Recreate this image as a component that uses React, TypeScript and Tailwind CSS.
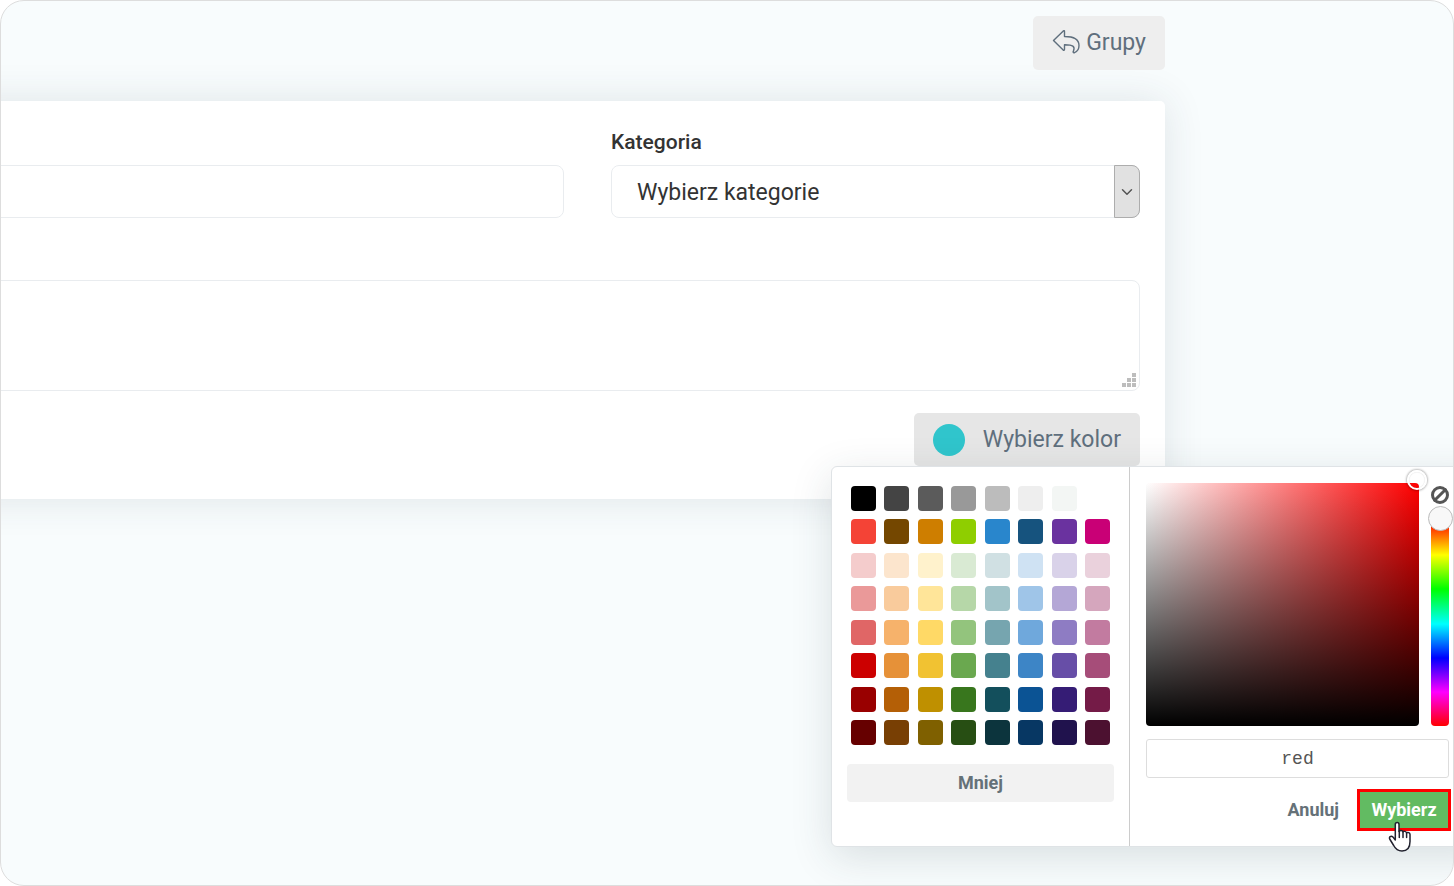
import { useState } from 'react';
import { Ban, ChevronDown } from 'lucide-react';

const PALETTE = [
  ['#000000', '#444444', '#5b5b5b', '#999999', '#bcbcbc', '#eeeeee', '#f3f6f4', '#ffffff'],
  ['#f44336', '#744700', '#ce7e00', '#8fce00', '#2986cc', '#16537e', '#6a329f', '#c90076'],
  ['#f4cccc', '#fce5cd', '#fff2cc', '#d9ead3', '#d0e0e3', '#cfe2f3', '#d9d2e9', '#ead1dc'],
  ['#ea9999', '#f9cb9c', '#ffe599', '#b6d7a8', '#a2c4c9', '#9fc5e8', '#b4a7d6', '#d5a6bd'],
  ['#e06666', '#f6b26b', '#ffd966', '#93c47d', '#76a5af', '#6fa8dc', '#8e7cc3', '#c27ba0'],
  ['#cc0000', '#e69138', '#f1c232', '#6aa84f', '#45818e', '#3d85c6', '#674ea7', '#a64d79'],
  ['#990000', '#b45f06', '#bf9000', '#38761d', '#134f5c', '#0b5394', '#351c75', '#741b47'],
  ['#660000', '#783f04', '#7f6000', '#274e13', '#0c343d', '#073763', '#20124d', '#4c1130'],
];

function ReplyIcon() {
  return (
    <svg width="28" height="28" viewBox="0 0 28 28" fill="none" stroke="currentColor" strokeWidth="1.4" strokeLinejoin="round">
      <path d="M1.500 11.500 11.300 1.900Q12.500 1.200 12.500 2.500V7.500C21 7.500 27 10 27 16.500 27 20 25.500 22.500 22.500 23.700 21 24 20.800 23 21.500 22 23.300 17.500 21 15.600 12.500 15.700V20.500Q12.300 21.800 11.200 21.100Z" />
    </svg>
  );
}

function ResizeGrip() {
  return (
    <svg className="absolute right-1 bottom-1 pointer-events-none" width="14" height="14" fill="#bdbdbd">
      <path d="M10 0h4v4h-4zM5 5h4v4H5zM10 5h4v4h-4zM0 10h4v4H0zM5 10h4v4H5zM10 10h4v4h-4z" />
    </svg>
  );
}

function HandCursor() {
  return (
    <svg
      className="absolute top-8 left-[31px] pointer-events-none"
      width="24"
      height="32"
      viewBox="0 0 24 32"
      fill="white"
      stroke="#22222f"
      strokeWidth="1.5"
      strokeLinejoin="round"
      strokeLinecap="round"
    >
      <path d="M7.300 19V3.500c0-2.700 3.700-2.700 3.700 0v7c1-1.300 3.500-1.200 3.900.3 1-.8 3.200-.6 3.600.9 1.500-.7 3.500 0 3.500 1.800v7c0 6-2.500 9.500-8 9.500-4.500 0-6.500-2-8.300-5.500L2 18.500c-1.500-2.500 1-4.300 2.800-2.600Z" />
      <path d="M11.300 10v6.500M15 11v5.500M18.600 12v4.500" fill="none" />
    </svg>
  );
}

function Swatches({ onPick }: { onPick: (color: string) => void }) {
  return (
    <div className="w-[298px] shrink-0 border-r border-[#ccc] pt-[19px] px-[15px]">
      <div className="flex flex-col justify-between h-[259px] mx-1">
        {PALETTE.map((row) => (
          <div key={row[0]} className="flex justify-between">
            {row.map((color) => (
              <button
                key={color}
                type="button"
                aria-label={color}
                onClick={() => onPick(color)}
                className="size-[25px] rounded-[4px]"
                style={{ backgroundColor: color }}
              />
            ))}
          </div>
        ))}
      </div>
      <button type="button" className="mt-[19px] w-full h-[38px] rounded-[4px] bg-[#f2f2f2] text-lg font-bold text-[#657178]">
        Mniej
      </button>
    </div>
  );
}

function ColorPicker() {
  const [value, setValue] = useState('red');
  const [hue, setHue] = useState(0);

  return (
    <div className="absolute top-full -right-[351px] z-10 flex w-[660px] h-[381px] rounded-md border border-[#dfe3e6] bg-white shadow-[0_10px_40px_rgba(40,60,70,0.15)]">
      <Swatches onPick={setValue} />
      <div className="pt-4 pl-4">
        <div className="flex w-[303px] justify-between">
          {/* Saturation / brightness */}
          <div
            className="relative w-[273px] h-[243px] rounded-[4px]"
            style={{
              backgroundImage: `linear-gradient(to top, #000, transparent), linear-gradient(to right, #fff, hsl(${hue} 100% 50%))`,
            }}
          >
            <span className="absolute -top-[13px] -right-2 size-5 rounded-full border-2 border-white shadow-[0_0_2px_1px_rgba(0,0,0,0.25),inset_0_0_1px_rgba(0,0,0,0.25)]" />
          </div>
          {/* Hue */}
          <div className="flex flex-col items-center w-[18px] pt-[3px]">
            <button type="button" aria-label="Wyczyść" className="text-[#555]">
              <Ban size={18} strokeWidth={4} className="-scale-x-100" />
            </button>
            <input
              type="range"
              aria-label="Odcień"
              min={0}
              max={360}
              value={hue}
              onChange={(e) => setHue(Number(e.target.value))}
              className="mt-[2px] w-[18px] h-[220px] appearance-none rounded-[4px] [writing-mode:vertical-lr] bg-[linear-gradient(to_bottom,transparent_12px,#f00_15px,#ff0_49px,#0f0_83px,#0ff_118px,#00f_152px,#f0f_186px,#f00_220px)] [&::-webkit-slider-thumb]:appearance-none [&::-webkit-slider-thumb]:size-[25px] [&::-webkit-slider-thumb]:rounded-full [&::-webkit-slider-thumb]:border [&::-webkit-slider-thumb]:border-[#bbb] [&::-webkit-slider-thumb]:bg-[#f8f8f8]"
            />
          </div>
        </div>
        <input
          type="text"
          aria-label="Kolor"
          value={value}
          onChange={(e) => setValue(e.target.value)}
          className="mt-[13px] block w-[303px] h-[39px] rounded-[3px] border border-[#ddd] text-center font-['Liberation_Mono',monospace] text-lg text-[#555] outline-none"
        />
        <div className="mt-[11px] flex w-[305px] items-center justify-end gap-[18px]">
          <button type="button" className="text-lg font-bold text-[#657178]">
            Anuluj
          </button>
          <div className="relative">
            <button type="button" className="block h-[42px] w-[94px] border-3 border-[#f00] bg-[#62bb62] text-lg font-bold text-white">
              Wybierz
            </button>
            <HandCursor />
          </div>
        </div>
      </div>
    </div>
  );
}

function App() {
  return (
    <div className="min-h-screen overflow-hidden rounded-3xl border border-[#ddd] bg-[#f8fcfd] pt-[15px] font-[Roboto,sans-serif] text-[23px] text-[#333]">
      <div className="mr-[288px]">
        <header className="flex justify-end">
          <button type="button" className="flex h-[54px] items-center gap-[6px] rounded-[5px] bg-[#eee] px-[19px] text-[#5f6f7d]">
            <ReplyIcon />
            Grupy
          </button>
        </header>

        <main className="mt-[31px] -ml-10 rounded-[5px] bg-white pt-6 pr-[25px] pb-[33px] shadow-[0_0_40px_rgba(40,60,70,0.12)]">
          <div className="flex items-end gap-[47px]">
            <input type="text" aria-label="Nazwa" className="h-[53px] min-w-0 flex-1 rounded-lg border border-[#e9ecef] px-6 outline-none" />
            <div className="w-[529px]">
              <label htmlFor="category" className="block text-[21px] leading-[34px] font-medium">
                Kategoria
              </label>
              <div className="relative mt-[6px]">
                <select id="category" className="block h-[53px] w-full appearance-none rounded-lg border border-[#e9ecef] bg-white px-[25px] pt-[3px] outline-none">
                  <option>Wybierz kategorie</option>
                </select>
                <span className="pointer-events-none absolute inset-y-0 right-0 flex w-[26px] items-center justify-center rounded-r-lg border border-[#adadad] bg-[#e1e1e1]">
                  <ChevronDown size={18} strokeWidth={2} className="text-[#555]" />
                </span>
              </div>
            </div>
          </div>

          <div className="relative mt-[62px]">
            <textarea aria-label="Opis" className="block h-[111px] w-full resize-none rounded-lg border border-[#e9ecef] p-6 outline-none" />
            <ResizeGrip />
          </div>

          <div className="mt-[22px] flex justify-end">
            <div className="relative">
              <button type="button" className="flex h-[53px] items-center gap-[18px] rounded-[5px] bg-[#e6e6e6] px-[19px] pt-px text-[#5f6f7d]">
                <span className="size-8 rounded-full bg-[#30c5cc]" />
                Wybierz kolor
              </button>
              <ColorPicker />
            </div>
          </div>
        </main>
      </div>
    </div>
  );
}

export default App;
